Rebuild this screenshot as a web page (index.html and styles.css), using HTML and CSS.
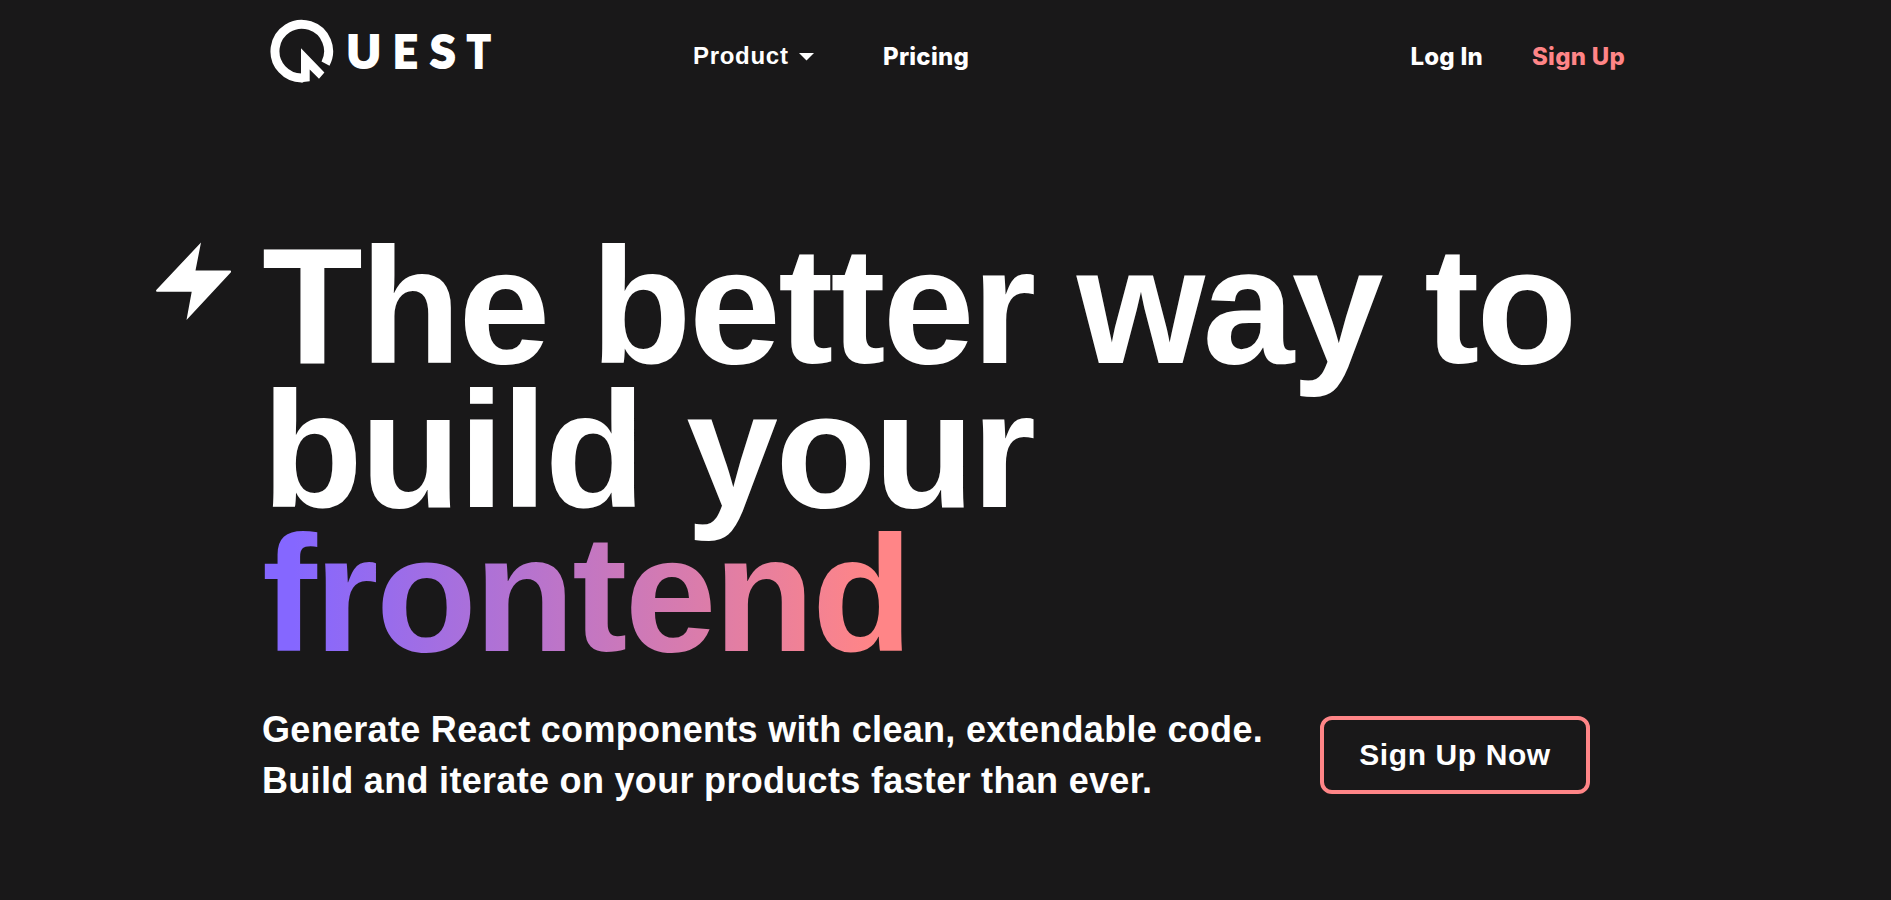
FILE: index.html
```html
<!DOCTYPE html>
<html lang="en">
<head>
<meta charset="utf-8">
<title>Quest</title>
<link rel="stylesheet" href="styles.css">
</head>
<body>
<header class="header">
  <a class="logo" aria-label="Quest">
    <svg width="228" height="70" viewBox="268 18 228 70">
      <path class="ring" d="M325.5 63.6A26.8 26.8 0 1 0 303 77.9" />
      <path class="fill" d="M301 48.3L324.4 72.6L319 78.7L309.7 69.5V81.3L301 82.3Z" />
      <g class="wordmark">
        <text x="346.5" y="68" textLength="34.5" lengthAdjust="spacingAndGlyphs">U</text>
        <text x="393" y="68" textLength="24.5" lengthAdjust="spacingAndGlyphs">E</text>
        <text x="430" y="68" textLength="25.5" lengthAdjust="spacingAndGlyphs">S</text>
        <text x="467" y="68" textLength="23.5" lengthAdjust="spacingAndGlyphs">T</text>
      </g>
    </svg>
  </a>
  <nav class="nav">
    <a class="product">Product<svg width="15" height="8" viewBox="0 0 15 8"><path class="fill" d="M0 0H15L7.5 7.5Z"/></svg></a>
    <a class="link pricing">Pricing</a>
  </nav>
  <div class="account">
    <a class="link login">Log In</a>
    <a class="link signup">Sign Up</a>
  </div>
</header>
<main class="hero">
  <svg class="bolt" width="76" height="80" viewBox="155 242 76 80"><path class="fill" d="M201 242.5L195.5 270.5H230.3Q231.8 271 230.7 272.6L186.5 320L191.7 291.7H156.7Q155.5 291 156.5 289.7Z"/></svg>
  <div class="content">
    <h1 class="title">The better way to<br>build your<br><span class="gradient">frontend</span></h1>
    <div class="pitch">
      <p class="subtitle">Generate React components with clean, extendable code.<br>Build and iterate on your products faster than ever.</p>
      <a class="cta">Sign Up Now</a>
    </div>
  </div>
</main>
</body>
</html>
```

FILE: styles.css
```css
* { box-sizing: border-box; }
body { margin: 0; height: 900px; overflow: hidden; background: #191819; color: #fff; font-family: "Liberation Sans", Arial, sans-serif; font-weight: 700; }
.header { display: flex; height: 112px; padding: 18px 266px 0 268px; }
.logo { width: 425px; height: 70px; }
.ring { fill: none; stroke: #fff; stroke-width: 9; }
.fill { fill: #fff; }
.wordmark { fill: #fff; stroke: #fff; stroke-width: 2px; font-family: Lato, sans-serif; font-weight: 900; font-size: 46px; }
.nav { display: flex; flex: 1; padding-top: 24px; }
.product { width: 190px; font-size: 24px; line-height: 28px; letter-spacing: 0.7px; white-space: nowrap; }
.product svg { margin: 0 0 3px 10px; }
.link { font-family: Inter, sans-serif; font-size: 24px; font-weight: 800; line-height: 28px; letter-spacing: 0.25px; white-space: nowrap; }
.pricing { padding-top: 1px; }
.account { display: flex; gap: 49px; padding-top: 25px; }
.signup { color: #ff8587; }
.hero { display: flex; gap: 31px; padding: 122px 0 0 155px; }
.bolt { flex: none; margin-top: 8px; }
.title { margin: 0; font-size: 165px; line-height: 144px; letter-spacing: -2.6px; white-space: nowrap; }
.gradient { display: inline-block; padding-bottom: 8px; margin-bottom: -8px; color: transparent; background: linear-gradient(90deg, #8567ff 5%, #ff8587 94%); background-clip: text; -webkit-background-clip: text; }
.pitch { display: flex; padding-top: 38px; }
.subtitle { width: 1058px; margin: 0; font-size: 36px; line-height: 51px; letter-spacing: 0.31px; white-space: nowrap; }
.cta { display: flex; align-items: center; justify-content: center; width: 270px; height: 78px; margin-top: 12px; border: 4px solid #ff8587; border-radius: 12px; font-size: 30px; letter-spacing: 0.6px; white-space: nowrap; }
```
